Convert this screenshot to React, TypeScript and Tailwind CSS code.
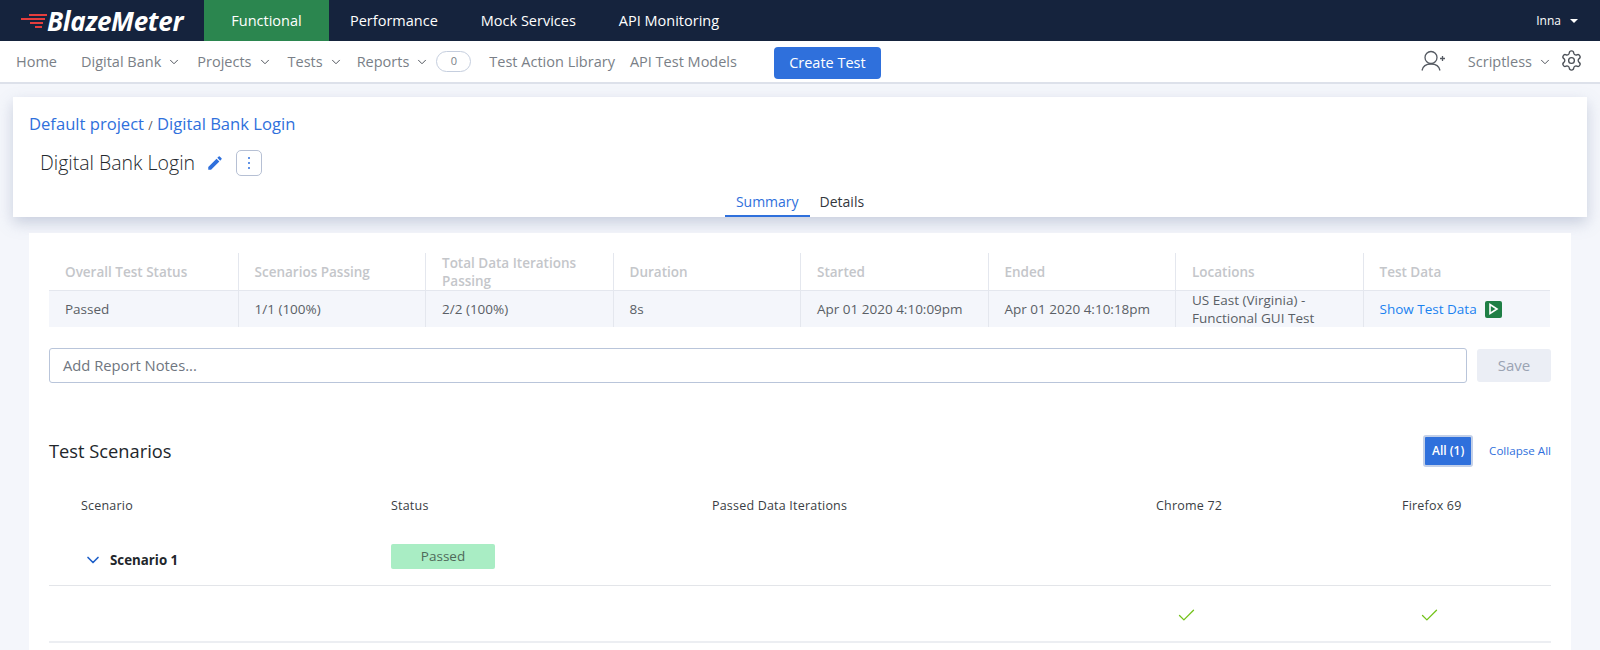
import React from "react";
import { ChevronDown, Settings, Check } from "lucide-react";

const font = "font-['Open_Sans',sans-serif]";

const columns = [
  { title: "Overall Test Status", value: "Passed" },
  { title: "Scenarios Passing", value: "1/1 (100%)" },
  { title: "Total Data Iterations Passing", value: "2/2 (100%)" },
  { title: "Duration", value: "8s" },
  { title: "Started", value: "Apr 01 2020 4:10:09pm" },
  { title: "Ended", value: "Apr 01 2020 4:10:18pm" },
  { title: "Locations", value: "US East (Virginia) - Functional GUI Test" },
  { title: "Test Data", value: "" },
];

const Logo = () => (
  <div className="flex items-center w-[204px] pl-[21px]">
    <svg width="26" height="16" viewBox="0 0 26 16" className="mt-[1px]">
      <rect x="8" y="1" width="18" height="2" fill="#e53e3e" />
      <rect x="0" y="5" width="24" height="2" fill="#e53e3e" />
      <rect x="9" y="9" width="13" height="2" fill="#e53e3e" />
      <rect x="14" y="13" width="7" height="2" fill="#e53e3e" />
    </svg>
    <span className="text-[26px] font-bold italic text-white tracking-[-0.3px] leading-none">BlazeMeter</span>
  </div>
);

const NavItem = ({ label, className = "" }: { label: string; className?: string }) => (
  <span className={`flex items-center gap-[6px] ${className}`}>
    {label}
    <ChevronDown size={14} strokeWidth={1.7} className="text-[#4f545b]" />
  </span>
);

const TopBar = () => (
  <div className="flex h-[41px] bg-[#15233d] text-white text-[14.5px] font-medium items-stretch">
    <Logo />
    <div className="flex items-center justify-center w-[125px] bg-[#2b864f]">Functional</div>
    <div className="flex items-center pl-[21px] gap-[43px]">
      <span>Performance</span>
      <span>Mock Services</span>
      <span>API Monitoring</span>
    </div>
    <div className="ml-auto flex items-center gap-[9px] pr-[22px] text-[12px]">
      <span>Inna</span>
      <span className="w-0 h-0 border-x-4 border-x-transparent border-t-4 border-t-white" />
    </div>
  </div>
);

const SubNav = () => (
  <div className="flex h-[43px] bg-white items-center pl-4 pr-[17px] text-[14.5px] text-[#7a7f87] border-b-2 border-[#dde1ea]">
    <span className="mr-6">Home</span>
    <NavItem label="Digital Bank" className="mr-[16px]" />
    <NavItem label="Projects" className="mr-[16px]" />
    <NavItem label="Tests" className="mr-[14px]" />
    <NavItem label="Reports" className="mr-[7px]" />
    <span className="flex items-center justify-center w-[35px] h-[21px] rounded-full border border-[#c5cede] text-[11px] mr-[18px]">0</span>
    <span className="mr-[15px]">Test Action Library</span>
    <span className="mr-[37px]">API Test Models</span>
    <button className="w-[107px] h-[32px] mt-[3px] rounded bg-[#2f70dc] text-white text-[14.5px] font-medium">Create Test</button>
    <div className="ml-auto flex items-center">
      <svg width="25" height="22" viewBox="0 0 25 22" fill="none" stroke="#555a62" strokeWidth="1.3" className="mr-[22px] -mt-[2px]">
        <circle cx="10" cy="7.5" r="6" />
        <path d="M1 20.5c.8-4 3.8-6.5 9-6.5s8.2 2.5 9 6.5" />
        <path d="M19 8.5h5M21.5 6v5" />
      </svg>
      <NavItem label="Scriptless" className="mr-[8px]" />
      <Settings size={23} strokeWidth={1.4} className="text-[#4a4f56] -mt-[2px]" />
    </div>
  </div>
);

const HeaderCard = () => (
  <div className="mx-[13px] mt-[13px] h-[120px] bg-white shadow-[0_6px_14px_rgba(120,135,170,0.35)] flex flex-col">
    <div className="pl-4 pt-[16px] text-[16.6px] leading-[22px] text-[#2f70dc]">
      Default project <span className="text-[12px] text-[#555]">/</span> Digital Bank Login
    </div>
    <div className="flex items-center pl-[27px] mt-[13px]">
      <span className="text-[19.5px] leading-[26px] text-[#24282d] font-light">Digital Bank Login</span>
      <svg width="18" height="18" viewBox="0 0 24 24" className="ml-[11px]" fill="#2f70dc">
        <path d="M3 17.25V21h3.75L17.81 9.94l-3.75-3.75L3 17.25zM20.71 7.04a1 1 0 0 0 0-1.41l-2.34-2.34a1 1 0 0 0-1.41 0l-1.83 1.83 3.75 3.75 1.83-1.83z" />
      </svg>
      <button className="ml-[12px] flex h-[26px] w-[26px] flex-col items-center justify-center gap-[3px] rounded-[5px] border border-[#b6c0d4]">
        <span className="h-[2px] w-[2px] rounded-full bg-[#2f70dc]" />
        <span className="h-[2px] w-[2px] rounded-full bg-[#2f70dc]" />
        <span className="h-[2px] w-[2px] rounded-full bg-[#2f70dc]" />
      </button>
    </div>
    <div className="mt-auto flex justify-center text-[14px] leading-[18px] pr-[1px]">
      <span className="px-[11px] pt-[3px] pb-[4px] text-[#2f70dc] font-medium border-b-2 border-[#2f70dc]">Summary</span>
      <span className="px-[10px] pt-[3px] text-[#33373d] font-medium">Details</span>
    </div>
  </div>
);

const SummaryTable = () => (
  <div className="grid grid-cols-[188.5px_repeat(7,1fr)] mr-[1px]">
    {columns.map((c, i) => (
      <div key={c.title} className={`flex items-center h-[38px] px-4 border-b border-[#e4e7ee] text-[13.5px] leading-[18px] font-semibold text-[#c4c6ca] ${i > 0 ? "border-l" : ""}`}>
        {c.title}
      </div>
    ))}
    {columns.map((c, i) => (
      <div key={c.title} className={`flex items-center h-[36px] px-4 bg-[#f4f6fb] border-[#e4e7ee] text-[13.5px] leading-[18px] text-[#5a5f66] ${i > 0 ? "border-l" : ""}`}>
        {i === 7 ? (
          <span className="flex items-center gap-2 text-[#1a82f0]">
            Show Test Data
            <span className="flex h-[17px] w-[17px] items-center justify-center rounded-[2px] bg-[#1f7f45]">
              <svg width="11" height="12" viewBox="0 0 11 12" fill="none" stroke="#fff" strokeWidth="1.6">
                <path d="M2 1.5 9 6 2 10.5z" />
              </svg>
            </span>
          </span>
        ) : (
          c.value
        )}
      </div>
    ))}
  </div>
);

const NotesRow = () => (
  <div className="flex items-center gap-[10px] mt-[21px]">
    <div className="flex-1 h-[35px] flex items-center px-[13px] rounded-[3px] border border-[#b9c5da] text-[14.75px] text-[#6f7680]">
      Add Report Notes...
    </div>
    <button className="w-[74px] h-[33px] rounded-[3px] bg-[#ebeef5] text-[15px] text-[#9aa3b3]">Save</button>
  </div>
);

const Scenarios = () => (
  <div>
    <div className="flex items-center mt-[52px] h-[32px]">
      <h2 className="text-[18.3px] text-[#22262b]">Test Scenarios</h2>
      <button className="ml-auto w-[50px] h-[32px] rounded-[3px] bg-[#2f70dc] border-2 border-[#c3d0e8] text-white text-[12px] font-semibold">All (1)</button>
      <span className="ml-4 text-[11.6px] text-[#2f70dc]">Collapse All</span>
    </div>
    <div className="grid grid-cols-[310px_321px_444px_246px_1fr] mt-[30px] pl-[32px] text-[12.5px] leading-[18px] text-[#3a3e44] tracking-[0.2px]">
      <span>Scenario</span>
      <span>Status</span>
      <span>Passed Data Iterations</span>
      <span>Chrome 72</span>
      <span>Firefox 69</span>
    </div>
    <div className="grid grid-cols-[342px_1fr] h-[42px] mt-[29px] border-b border-[#e3e5e9] items-start">
      <span className="flex items-center gap-[7px] pl-[34px] pt-[6px] text-[13.3px] leading-[18px] font-bold text-[#22262b]">
        <ChevronDown size={20} strokeWidth={2} className="text-[#1d5fc8]" />
        Scenario 1
      </span>
      <span className="flex items-center justify-center w-[104px] h-[25px] rounded-[2px] bg-[#a9edc4] text-[13.5px] text-[#4f6a5a]">Passed</span>
    </div>
    <div className="grid grid-cols-[1127px_243px_1fr] h-[57px] pt-[4px] border-b-2 border-[#eceef2] items-center">
      <span />
      <Check size={21} strokeWidth={1.5} className="text-[#73c21a]" />
      <Check size={21} strokeWidth={1.5} className="text-[#73c21a]" />
    </div>
  </div>
);

export default function App() {
  return (
    <div className={`${font} h-[650px] w-full overflow-hidden bg-[#f4f6fb]`}>
      <TopBar />
      <SubNav />
      <HeaderCard />
      <div className="mx-[29px] mt-4 bg-white px-5 pt-5 h-[500px]">
        <SummaryTable />
        <NotesRow />
        <Scenarios />
      </div>
    </div>
  );
}
